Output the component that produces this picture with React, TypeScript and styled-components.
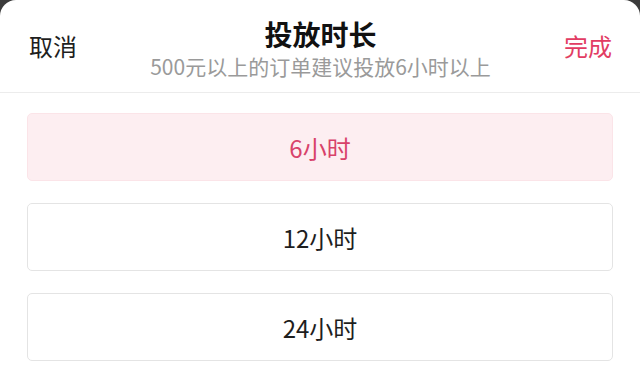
import React, { useState } from "react";
import styled, { createGlobalStyle } from "styled-components";

const GlobalStyle = createGlobalStyle`
  html, body {
    margin: 0;
    padding: 0;
    background: #3b3b3b;
  }
  body {
    font-family: "Noto Sans CJK SC", "Noto Sans", sans-serif;
    -webkit-font-smoothing: antialiased;
  }
`;

const Sheet = styled.div`
  width: 640px;
  height: 376px;
  background: #ffffff;
  border-radius: 16px 16px 0 0;
  overflow: hidden;
  box-sizing: border-box;
  display: flex;
  flex-direction: column;
`;

const Header = styled.div`
  height: 93px;
  flex-shrink: 0;
  box-sizing: border-box;
  border-bottom: 1px solid #ececec;
  display: grid;
  grid-template-columns: 1fr auto 1fr;
  align-items: center;
  padding: 0 28px 0 29px;
`;

const SideButton = styled.button<{ $primary?: boolean }>`
  border: none;
  background: none;
  padding: 0;
  font-family: inherit;
  font-size: 24px;
  line-height: 32px;
  color: ${(p) => (p.$primary ? "#e23c63" : "#1e1e1e")};
  justify-self: ${(p) => (p.$primary ? "end" : "start")};
  cursor: pointer;
`;

const TitleBlock = styled.div`
  align-self: start;
  display: flex;
  flex-direction: column;
  align-items: center;
  padding-top: 16px;
  white-space: nowrap;
`;

const Title = styled.div`
  font-size: 28px;
  font-weight: 600;
  line-height: 36px;
  color: #111111;
`;

const Subtitle = styled.div`
  font-size: 21px;
  line-height: 28px;
  color: #9a9a9a;
`;

const OptionList = styled.div`
  display: flex;
  flex-direction: column;
  gap: 22px;
  padding: 20px 27px;
`;

const Option = styled.div<{ $selected?: boolean }>`
  height: 68px;
  box-sizing: border-box;
  border-radius: 5px;
  border: 1px solid ${(p) => (p.$selected ? "#fbe4e8" : "#e4e4e4")};
  background: ${(p) => (p.$selected ? "#fdeef1" : "#ffffff")};
  color: ${(p) => (p.$selected ? "#d8426a" : "#1e1e1e")};
  display: flex;
  align-items: center;
  justify-content: center;
  font-size: 24px;
  cursor: pointer;
`;

const options = ["6小时", "12小时", "24小时"];

export default function App() {
  const [selected, setSelected] = useState(0);
  return (
    <>
      <GlobalStyle />
      <Sheet>
        <Header>
          <SideButton>取消</SideButton>
          <TitleBlock>
            <Title>投放时长</Title>
            <Subtitle>500元以上的订单建议投放6小时以上</Subtitle>
          </TitleBlock>
          <SideButton $primary>完成</SideButton>
        </Header>
        <OptionList>
          {options.map((o, i) => (
            <Option key={o} $selected={i === selected} onClick={() => setSelected(i)}>
              {o}
            </Option>
          ))}
        </OptionList>
      </Sheet>
    </>
  );
}
